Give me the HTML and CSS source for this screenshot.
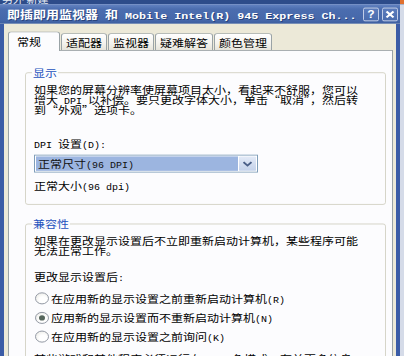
FILE: index.html
```html
<!DOCTYPE html>
<html lang="zh-CN">
<head>
<meta charset="utf-8">
<title>即插即用监视器 属性</title>
<link rel="stylesheet" href="styles.css">
</head>
<body>
<div class="screen">
  <div class="behind"><span class="behind-text">另外 新建</span><span class="behind-corner"></span></div>
  <div class="window">
    <div class="titlebar">
      <div class="title">即插即用监视器<span class="tl"> </span>和<span class="tl"> Mobile Intel(R) 945 Express Ch...</span></div>
      <div class="tbtns">
        <span class="tbtn"><span class="q">?</span></span>
        <span class="tbtn"><svg width="10" height="10" viewBox="0 0 10 10"><path d="M1.5 1.5 L8.5 8.5 M8.5 1.5 L1.5 8.5" stroke="#fff" stroke-width="2.2"/></svg></span>
      </div>
    </div>
    <div class="frame">
      <div class="tabs">
        <div class="tab active">常规</div>
        <div class="tab">适配器</div>
        <div class="tab">监视器</div>
        <div class="tab">疑难解答</div>
        <div class="tab">颜色管理</div>
      </div>
      <div class="panel">
        <fieldset class="group">
          <legend>显示</legend>
          <p class="txt">如果您的屏幕分辨率使屏幕项目太小，看起来不舒服，您可以<br>增大<span class="en"> DPI </span>以补偿。要只更改字体大小，单击“取消”，然后转<br>到“外观”选项卡。</p>
          <p class="line dpi-label"><span class="en">DPI </span>设置<span class="en">(D):</span></p>
          <div class="select">
            <div class="sel-value"><span>正常尺寸<span class="en">(96 DPI)</span></span></div>
            <div class="sel-btn"><svg width="11" height="8" viewBox="0 0 11 8"><path d="M1.5 1.8 L5.5 5.8 L9.5 1.8" fill="none" stroke="#4a5f88" stroke-width="2"/></svg></div>
          </div>
          <p class="line note">正常大小<span class="en">(96 dpi)</span></p>
        </fieldset>
        <fieldset class="group second">
          <legend>兼容性</legend>
          <p class="txt">如果在更改显示设置后不立即重新启动计算机，某些程序可能<br>无法正常工作。</p>
          <p class="line after-label">更改显示设置后<span class="en">:</span></p>
          <div class="radios">
            <div class="radio"><span class="circle"></span><span>在应用新的显示设置之前重新启动计算机<span class="en">(R)</span></span></div>
            <div class="radio"><span class="circle checked"></span><span>应用新的显示设置而不重新启动计算机<span class="en">(N)</span></span></div>
            <div class="radio"><span class="circle"></span><span>在应用新的显示设置之前询问<span class="en">(K)</span></span></div>
          </div>
          <p class="line cut">某些游戏和其他程序必须运行在<span class="en"> 256 </span>色模式。有关更多信息</p>
        </fieldset>
      </div>
    </div>
  </div>
</div>
</body>
</html>
```
FILE: styles.css
```css
html, body {
  margin: 0;
  padding: 0;
  overflow: hidden;
}
body {
  width: 404px;
  height: 356px;
  background: #d5dbe8;
  font-family: "Noto Sans CJK SC", sans-serif;
  font-size: 12px;
  color: #000;
}
.screen {
  width: 404px;
  height: 419px;
  transform: scaleY(0.85);
  transform-origin: 0 0;
  display: flex;
  flex-direction: column;
  background: #d5dbe8;
  overflow: hidden;
}
.behind {
  flex: none;
  height: 5px;
  background: #2d4c8a;
  display: flex;
  justify-content: space-between;
  overflow: hidden;
}
.behind-text {
  color: #e6ebf5;
  font-size: 11px;
  line-height: 11px;
  margin-top: -7px;
  padding-left: 2px;
  white-space: nowrap;
}
.behind-corner {
  width: 4px;
  background: #e0702e;
}
.window {
  flex: 1;
  width: 400px;
  min-height: 0;
  display: flex;
  flex-direction: column;
}
.titlebar {
  flex: none;
  height: 23px;
  display: flex;
  align-items: center;
  justify-content: space-between;
  padding: 0 2px 0 7px;
  background: linear-gradient(#6484c2, #4b6daf 25%, #4668aa 80%, #3d5e9f);
  color: #fff;
}
.title {
  font-weight: bold;
  font-size: 13px;
  line-height: 14px;
  white-space: nowrap;
  text-shadow: 1px 1px 0 #29437c;
}
.tl {
  font-family: "Liberation Mono", monospace;
  font-size: 11.7px;
  line-height: 0;
}
.tbtns {
  display: flex;
  gap: 3px;
}
.tbtn {
  width: 16px;
  height: 16px;
  box-sizing: border-box;
  border: 1px solid #ccd6ec;
  border-radius: 2px;
  background: linear-gradient(#5b7cbd, #4a6cae);
  display: flex;
  align-items: center;
  justify-content: center;
}
.q {
  font-family: "Liberation Sans", sans-serif;
  font-weight: bold;
  font-size: 12px;
  line-height: 12px;
  color: #fff;
}
.frame {
  flex: 1;
  min-height: 0;
  background: #ece9d8;
  border-left: 4px solid #3b5ca6;
  border-right: 4px solid #3b5ca6;
  padding-top: 8.5px;
  display: flex;
  flex-direction: column;
}
.tabs {
  flex: none;
  height: 22.5px;
  display: flex;
  align-items: flex-end;
  gap: 1px;
  padding-left: 4px;
}
.tab {
  box-sizing: border-box;
  height: 20px;
  padding: 0 4px;
  border: 1px solid #9aa3a6;
  border-bottom: none;
  border-radius: 3px 3px 0 0;
  background: linear-gradient(#ffffff, #f3f2ec 60%, #e6e4da);
  display: flex;
  align-items: center;
  line-height: 12px;
  white-space: nowrap;
}
.tab.active {
  height: 23.5px;
  margin-bottom: -1px;
  padding: 0 18px 0 8px;
  background: #fcfcfe;
  position: relative;
  z-index: 1;
}
.panel {
  flex: 1;
  min-height: 0;
  overflow: hidden;
  margin: 0 3px 0 4px;
  border: 1px solid #9aa3a6;
  border-bottom: none;
  background: #fcfcfe;
  padding: 18px 6px 0 16px;
}
.group {
  margin: 0;
  min-width: 0;
  border: 1px solid #d3d1c4;
  border-radius: 3px;
  padding: 7px 8px 15px 8px;
}
.group.second {
  margin-top: 15px;
}
.group legend {
  padding: 0 1px;
  margin-left: -2px;
  color: #2452bd;
  line-height: 14px;
}
.txt {
  margin: 0;
  line-height: 12px;
  white-space: nowrap;
}
.line {
  margin: 0;
  line-height: 12px;
  white-space: nowrap;
}
.en {
  font-family: "Liberation Mono", monospace;
  font-size: 10px;
  line-height: 0;
}
.dpi-label {
  margin-top: 28px;
}
.select {
  margin-top: 7px;
  width: 224px;
  height: 21px;
  box-sizing: border-box;
  border: 1px solid #7f9db9;
  background: #fff;
  padding: 1px;
  display: flex;
  gap: 1px;
}
.sel-value {
  flex: 1;
  background: #9cb5e0;
  padding-left: 2px;
  display: flex;
  align-items: center;
  line-height: 12px;
  color: #111;
}
.sel-btn {
  width: 17px;
  border-radius: 1px;
  background: linear-gradient(#e3eaf7, #c3d1ea);
  display: flex;
  align-items: center;
  justify-content: center;
}
.note {
  margin-top: 10px;
}
.after-label {
  margin-top: 19px;
}
.radios {
  margin-top: 12px;
  display: flex;
  flex-direction: column;
  gap: 8.5px;
}
.radio {
  height: 14px;
  display: flex;
  align-items: center;
  line-height: 12px;
  white-space: nowrap;
}
.circle {
  width: 14px;
  height: 14px;
  box-sizing: border-box;
  margin-left: 1px;
  margin-right: 2px;
  border: 1px solid #8a909c;
  border-radius: 50%;
  background: radial-gradient(circle at 60% 65%, #ffffff 35%, #e6e6e0 100%);
  display: flex;
  align-items: center;
  justify-content: center;
  flex: none;
}
.circle.checked::after {
  content: "";
  width: 6px;
  height: 6px;
  border-radius: 50%;
  background: #56665c;
}
.cut {
  margin-top: 12.5px;
}
```
